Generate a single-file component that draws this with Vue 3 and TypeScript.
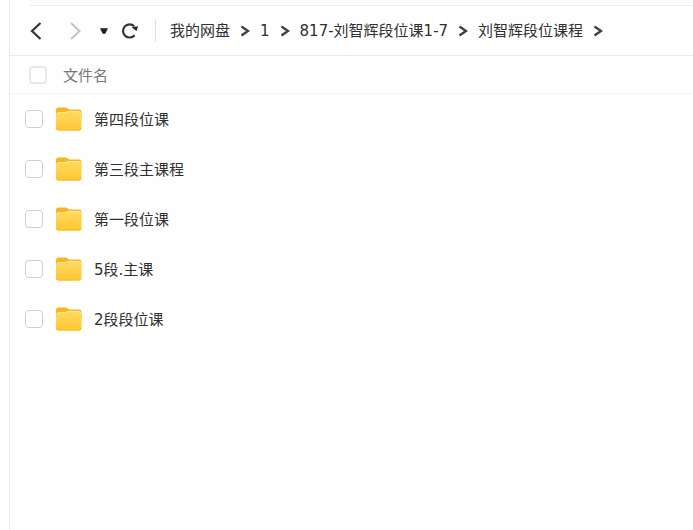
<script setup lang="ts">
import { ref } from 'vue'

interface Folder {
  name: string
  selected: boolean
}

const path: string[] = ['我的网盘', '1', '817-刘智辉段位课1-7', '刘智辉段位课程']

const folders = ref<Folder[]>([
  { name: '第四段位课', selected: false },
  { name: '第三段主课程', selected: false },
  { name: '第一段位课', selected: false },
  { name: '5段.主课', selected: false },
  { name: '2段段位课', selected: false },
])

function toggleAll(event: Event): void {
  const checked = (event.target as HTMLInputElement).checked
  folders.value.forEach((folder) => (folder.selected = checked))
}
</script>

<template>
  <main class="drive">
    <header class="toolbar">
      <div class="actions">
        <button class="action" type="button" aria-label="后退">
          <svg width="14" height="20" viewBox="0 0 14 20"><path d="M11.500 2 3 10l8.500 8" fill="none" stroke="#303540" stroke-width="2.200" /></svg>
        </button>
        <button class="action forward" type="button" aria-label="前进">
          <svg width="14" height="20" viewBox="0 0 14 20"><path d="M2 2 10.500 10l-8.500 8" fill="none" stroke="#c4c4c6" stroke-width="2" /></svg>
        </button>
        <button class="action history" type="button" aria-label="历史">
          <svg width="10" height="8" viewBox="0 0 10 8"><path d="M1 1.200h8L6.300 6.800H3.700z" fill="#1d222c" /></svg>
        </button>
        <button class="action" type="button" aria-label="刷新">
          <svg width="18" height="18" viewBox="0 0 18 18">
            <path d="M13.600 13.200A6.600 6.600 0 1 1 13.200 4.200" fill="none" stroke="#303540" stroke-width="2.200" />
            <path d="M10.600 5.200 17 4.200 15.600 9z" fill="#1d222c" />
          </svg>
        </button>
      </div>
      <nav class="path" aria-label="路径">
        <template v-for="part in path" :key="part">
          <a class="crumb" href="#">{{ part }}</a>
          <svg class="sep" width="10" height="12" viewBox="0 0 10 12"><path d="M1.500 1.500 8 6 1.500 10.500" fill="none" stroke="#3b404a" stroke-width="2.400" /></svg>
        </template>
      </nav>
    </header>

    <div class="heading">
      <input id="all" class="check light" type="checkbox" @change="toggleAll" />
      <label class="name" for="all">文件名</label>
    </div>

    <ul class="list">
      <li v-for="(folder, i) in folders" :key="folder.name" class="row">
        <input :id="`folder-${i}`" v-model="folder.selected" class="check" type="checkbox" />
        <svg class="folder" width="26" height="24" viewBox="0 0 26 24">
          <defs>
            <linearGradient :id="`face-${i}`" x1="0" y1="0" x2="0" y2="1">
              <stop offset="0" stop-color="#ffda62" />
              <stop offset="1" stop-color="#ffc632" />
            </linearGradient>
          </defs>
          <path d="M0 3a2.500 2.500 0 0 1 2.500-2.500h7.200c1.600 0 2 1.900 3.800 1.900h9.500a2.500 2.500 0 0 1 2.500 2.500V12H0z" fill="#f9b51f" />
          <path d="M0 8a3 3 0 0 1 3-3h5.500c2 0 2.500-1 4.500-1h10a2.500 2.500 0 0 1 2.500 2.500V21a2.500 2.500 0 0 1-2.500 2.500H2.500A2.500 2.500 0 0 1 0 21z" :fill="`url(#face-${i})`" />
          <path d="M1.500 7.500Q1.800 5.500 3.500 5.500h5.300c2 0 2.500-1 4.500-1h9.200q2 0 2.200 2" fill="none" stroke="#ffe793" stroke-width="1" />
          <path d="M.4 21.300q.4 1.700 2.100 1.700H23q1.800 0 2.100-1.700" fill="none" stroke="#fbb922" stroke-width="1" />
        </svg>
        <label class="name" :for="`folder-${i}`">{{ folder.name }}</label>
      </li>
    </ul>
  </main>
</template>

<style>
body {
  background: #fefefe;
}
</style>

<style scoped>
.drive {
  box-sizing: border-box;
  min-height: 100vh;
  margin-left: 9px;
  padding-top: 5px;
  border-left: 1px solid #ececec;
  color: #303030;
  font: 15px/20px "DejaVu Sans", "Noto Sans CJK SC", sans-serif;
}

.toolbar {
  display: flex;
  align-items: center;
  height: 48px;
  padding-top: 2px;
  border-bottom: 1px solid #ececec;
  position: relative;
}

.toolbar::before {
  content: "";
  position: absolute;
  top: 0;
  left: 20px;
  right: 0;
  height: 1px;
  background: #ececec;
}

.actions {
  display: flex;
  align-items: center;
  padding: 0 16px 0 19px;
  border-right: 1px solid #dedede;
  height: 22px;
}

.action {
  display: flex;
  padding: 0;
  border: 0;
  background: none;
}

.forward {
  margin-left: 26px;
}

.history {
  margin: 0 12px 0 16px;
}

.path {
  display: flex;
  align-items: center;
  padding-left: 14px;
  white-space: nowrap;
}

.crumb {
  color: inherit;
  text-decoration: none;
}

.sep {
  margin: 0 10px;
}

.heading {
  display: flex;
  align-items: center;
  gap: 16px;
  height: 37px;
  padding-left: 19px;
  border-bottom: 1px solid #f3f3f3;
  color: #777;
}

.check {
  appearance: none;
  flex: none;
  box-sizing: border-box;
  width: 18px;
  height: 18px;
  margin: 0;
  border: 1px solid #ccd0d6;
  border-radius: 4px;
  background: #fff;
}

.check.light {
  border: 2px solid #e8e8e8;
}

.check:checked {
  background: #8eb4e8;
}

.name {
  padding-top: 2px;
}

.list {
  margin: 0;
  padding: 0;
  list-style: none;
}

.row {
  display: flex;
  align-items: center;
  height: 50px;
  padding-left: 15px;
}

.folder {
  margin: 0 12px 0 13px;
}
</style>
